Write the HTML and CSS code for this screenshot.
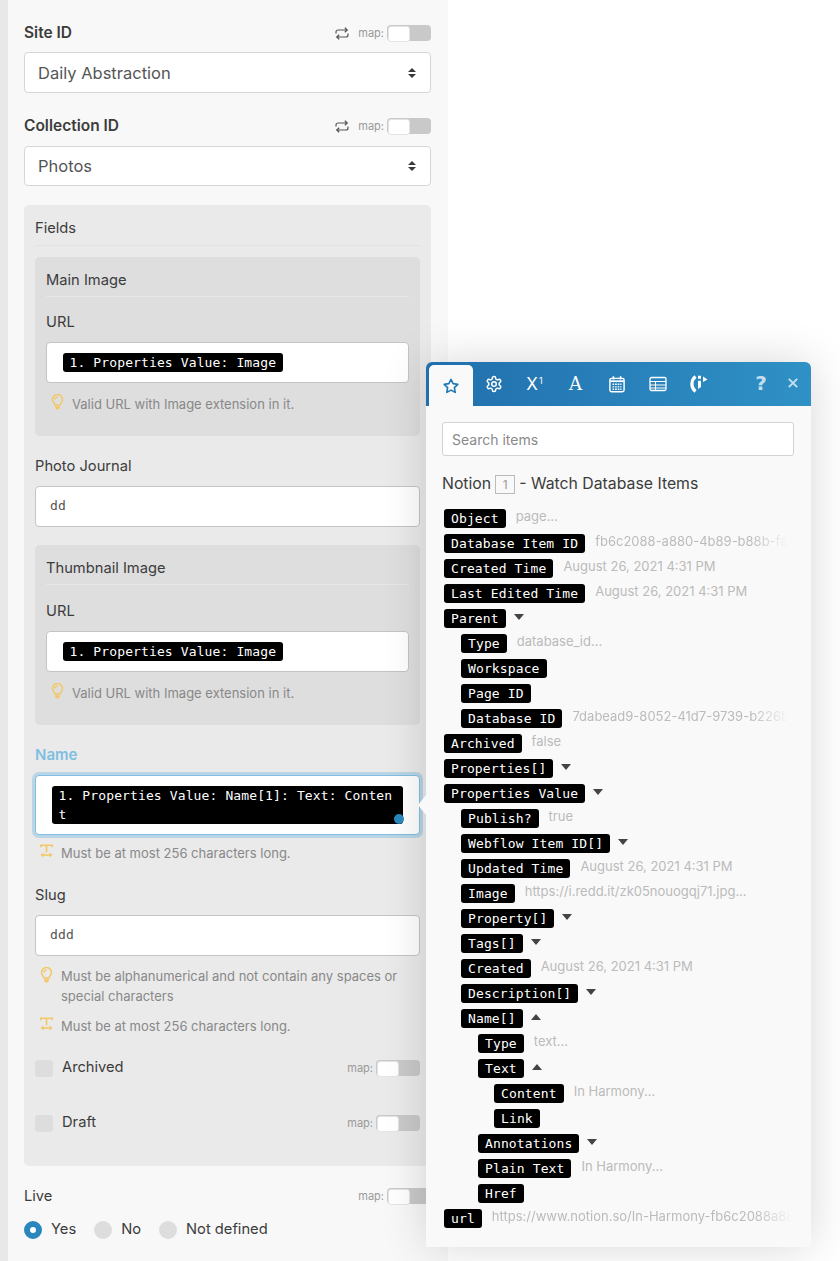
FILE: index.html
```html
<!DOCTYPE html>
<html lang="en">
<head>
<meta charset="utf-8">
<title>Webflow module mapping</title>
<link rel="stylesheet" href="styles.css">
</head>
<body>
<svg class="defs" aria-hidden="true">
  <symbol id="i-repeat" viewBox="0 0 14 13"><path d="M1 6.500V5a2 2 0 0 1 2-2h9M9.800 .7 12.300 3 9.800 5.300M13 6.500V8a2 2 0 0 1-2 2H2M4.200 7.700 1.700 10l2.500 2.300" fill="none" stroke="currentColor" stroke-width="1.200"/></symbol>
  <symbol id="i-sort" viewBox="0 0 8 10"><path d="M4 0 8 4H0zM4 10 0 6h8z" fill="currentColor"/></symbol>
  <symbol id="i-bulb" viewBox="0 0 12 16"><path d="M3.600 11C3.300 9.300 1 8.300 1 5.500a5 5 0 0 1 10 0C11 8.300 8.700 9.300 8.400 11zM6 3a2.500 2.500 0 0 0-2.500 2.500" fill="none" stroke="currentColor" stroke-width="1.500"/><path d="M3.700 12.300h4.600V14L7 15.500H5L3.700 14z" fill="currentColor"/></symbol>
  <symbol id="i-width" viewBox="0 0 13 13"><path d="M.8 2.800V.8h11.400v2M6.500 .8v7" fill="none" stroke="currentColor" stroke-width="1.600"/><path d="M.5 10.500 3.500 8v1.700h6V8l3 2.500-3 2.500v-1.700h-6V13z" fill="currentColor"/></symbol>
</svg>

<main class="panel">
  <div class="label-row"><span class="label strong">Site ID</span><span class="map-box"><svg class="repeat"><use href="#i-repeat"/></svg><span class="map-text">map:</span><span class="toggle"></span></span></div>
  <div class="select"><span>Daily Abstraction</span><svg class="sort"><use href="#i-sort"/></svg></div>

  <div class="label-row second"><span class="label strong">Collection ID</span><span class="map-box"><svg class="repeat"><use href="#i-repeat"/></svg><span class="map-text">map:</span><span class="toggle"></span></span></div>
  <div class="select short"><span>Photos</span><svg class="sort"><use href="#i-sort"/></svg></div>

  <section class="fields">
    <div class="section-head">Fields</div>

    <div class="subpanel">
      <div class="sub-head">Main Image</div>
      <div class="label sub-label">URL</div>
      <div class="input"><span class="pill">1. Properties Value: Image</span></div>
      <div class="hint"><svg class="hint-icon"><use href="#i-bulb"/></svg><span>Valid URL with Image extension in it.</span></div>
    </div>

    <div class="label field-label">Photo Journal</div>
    <div class="input mono">dd</div>

    <div class="subpanel next">
      <div class="sub-head">Thumbnail Image</div>
      <div class="label sub-label">URL</div>
      <div class="input"><span class="pill">1. Properties Value: Image</span></div>
      <div class="hint"><svg class="hint-icon"><use href="#i-bulb"/></svg><span>Valid URL with Image extension in it.</span></div>
    </div>

    <div class="label field-label name-label">Name</div>
    <div class="input focused"><span class="pill wrap">1. Properties Value: Name[1]: Text: Content</span><span class="dot"></span></div>
    <div class="hint name-hint"><svg class="hint-icon"><use href="#i-width"/></svg><span>Must be at most 256 characters long.</span></div>

    <div class="label field-label slug-label">Slug</div>
    <div class="input mono">ddd</div>
    <div class="hint multi"><svg class="hint-icon"><use href="#i-bulb"/></svg><span>Must be alphanumerical and not contain any spaces or special characters</span></div>
    <div class="hint last-hint"><svg class="hint-icon"><use href="#i-width"/></svg><span>Must be at most 256 characters long.</span></div>

    <div class="check-row first-check"><span class="check"></span><span class="label">Archived</span><span class="map-box"><span class="map-text">map:</span><span class="toggle"></span></span></div>
    <div class="check-row"><span class="check"></span><span class="label">Draft</span><span class="map-box"><span class="map-text">map:</span><span class="toggle"></span></span></div>
  </section>

  <div class="label-row live"><span class="label">Live</span><span class="map-box"><span class="map-text">map:</span><span class="toggle"></span></span></div>
  <div class="radios">
    <span class="radio on"></span><span class="label radio-text">Yes</span>
    <span class="radio"></span><span class="label radio-text">No</span>
    <span class="radio"></span><span class="label radio-text">Not defined</span>
  </div>
</main>

<span class="notch"></span>

<aside class="popup">
  <nav class="tabs">
    <span class="tab active"><svg class="tab-icon" viewBox="0 0 24 24"><path d="M12 3.200l2.800 5.700 6.300.9-4.600 4.400 1.100 6.300-5.600-3-5.600 3 1.100-6.300-4.600-4.400 6.300-.9z" fill="none" stroke="currentColor" stroke-width="2.200" stroke-linejoin="round"/></svg></span>
    <span class="tab"><svg class="tab-icon" viewBox="0 0 24 24" fill="none" stroke="currentColor" stroke-width="2"><path d="M12.220 2h-.44a2 2 0 0 0-2 2v.18a2 2 0 0 1-1 1.730l-.43.25a2 2 0 0 1-2 0l-.15-.08a2 2 0 0 0-2.730.73l-.22.38a2 2 0 0 0 .73 2.730l.15.1a2 2 0 0 1 1 1.720v.51a2 2 0 0 1-1 1.740l-.15.09a2 2 0 0 0-.73 2.730l.22.38a2 2 0 0 0 2.730.73l.15-.08a2 2 0 0 1 2 0l.43.25a2 2 0 0 1 1 1.730V20a2 2 0 0 0 2 2h.44a2 2 0 0 0 2-2v-.18a2 2 0 0 1 1-1.730l.43-.25a2 2 0 0 1 2 0l.15.08a2 2 0 0 0 2.730-.73l.22-.39a2 2 0 0 0-.73-2.730l-.15-.08a2 2 0 0 1-1-1.740v-.5a2 2 0 0 1 1-1.740l.15-.09a2 2 0 0 0 .73-2.730l-.22-.38a2 2 0 0 0-2.730-.73l-.15.08a2 2 0 0 1-2 0l-.43-.25a2 2 0 0 1-1-1.730V4a2 2 0 0 0-2-2z"/><circle cx="12" cy="12" r="3"/></svg></span>
    <span class="tab tab-x">X<sup class="tab-sup">1</sup></span>
    <span class="tab tab-a">A</span>
    <span class="tab"><svg class="tab-icon" viewBox="0 0 16 16" fill="none" stroke="currentColor"><rect x="1.700" y="3" width="12.600" height="11.800" rx="1.500" stroke-width="1.300"/><path d="M2 5.500h12" stroke-width="1.600"/><path d="M4.800 1v3M11.200 1v3" stroke-width="1.500"/><path d="M4 8.200h8M4 10.500h8M4 12.700h8" stroke-width="1.200" stroke-dasharray="1.500 .8"/></svg></span>
    <span class="tab"><svg class="tab-icon" viewBox="0 0 18 16" fill="none" stroke="currentColor"><rect x="1" y="1.500" width="16" height="13" rx="1.500" stroke-width="1.300"/><path d="M1 5.500h16M1 9h16M1 12h16M6.500 5.500V14.500" stroke-width="1.100"/></svg></span>
    <span class="tab"><svg class="tab-icon logo" viewBox="0 0 18 18"><path d="M5.500 1.500C.7 5.500.7 12.500 5.500 16.500" fill="none" stroke="currentColor" stroke-width="3.200"/><path d="M8 .8h3v3H8zM8 5.800h3V12l-3 2z" fill="currentColor"/><path d="M13 1.500l4.500 3L13 7z" fill="currentColor"/></svg></span>
    <span class="tab-tools">
      <span class="tool tool-help">?</span>
      <span class="tool"><svg class="close" viewBox="0 0 10 10"><path d="M.8.800l8.400 8.400M9.200.800.800 9.200" stroke="currentColor" stroke-width="1.900" fill="none"/></svg></span>
    </span>
  </nav>
  <div class="popup-body">
    <div class="search">Search items</div>
    <h2 class="module">Notion <span class="module-num">1</span> - Watch Database Items</h2>
    <ul class="tree">
      <li class="row"><span class="pill">Object</span><span class="val">page...</span></li>
      <li class="row"><span class="pill">Database Item ID</span><span class="val fade">fb6c2088-a880-4b89-b88b-fa</span></li>
      <li class="row"><span class="pill">Created Time</span><span class="val">August 26, 2021 4:31 PM</span></li>
      <li class="row"><span class="pill">Last Edited Time</span><span class="val">August 26, 2021 4:31 PM</span></li>
      <li class="row"><span class="pill">Parent</span><span class="caret"></span></li>
      <li class="row l1"><span class="pill">Type</span><span class="val">database_id...</span></li>
      <li class="row l1"><span class="pill">Workspace</span></li>
      <li class="row l1"><span class="pill">Page ID</span></li>
      <li class="row l1"><span class="pill">Database ID</span><span class="val fade">7dabead9-8052-41d7-9739-b226b</span></li>
      <li class="row"><span class="pill">Archived</span><span class="val">false</span></li>
      <li class="row"><span class="pill">Properties[]</span><span class="caret"></span></li>
      <li class="row"><span class="pill">Properties Value</span><span class="caret"></span></li>
      <li class="row l1"><span class="pill">Publish?</span><span class="val">true</span></li>
      <li class="row l1"><span class="pill">Webflow Item ID[]</span><span class="caret"></span></li>
      <li class="row l1"><span class="pill">Updated Time</span><span class="val">August 26, 2021 4:31 PM</span></li>
      <li class="row l1"><span class="pill">Image</span><span class="val">https://i.redd.it/zk05nouogqj71.jpg...</span></li>
      <li class="row l1"><span class="pill">Property[]</span><span class="caret"></span></li>
      <li class="row l1"><span class="pill">Tags[]</span><span class="caret"></span></li>
      <li class="row l1"><span class="pill">Created</span><span class="val">August 26, 2021 4:31 PM</span></li>
      <li class="row l1"><span class="pill">Description[]</span><span class="caret"></span></li>
      <li class="row l1"><span class="pill">Name[]</span><span class="caret up"></span></li>
      <li class="row l2"><span class="pill">Type</span><span class="val">text...</span></li>
      <li class="row l2"><span class="pill">Text</span><span class="caret up"></span></li>
      <li class="row l3"><span class="pill">Content</span><span class="val">In Harmony...</span></li>
      <li class="row l3"><span class="pill">Link</span></li>
      <li class="row l2"><span class="pill">Annotations</span><span class="caret"></span></li>
      <li class="row l2"><span class="pill">Plain Text</span><span class="val">In Harmony...</span></li>
      <li class="row l2"><span class="pill">Href</span></li>
      <li class="row"><span class="pill">url</span><span class="val fade">https://www.notion.so/In-Harmony-fb6c2088a88</span></li>
    </ul>
  </div>
</aside>
</body>
</html>
```

FILE: styles.css
```css
* { box-sizing: border-box; }
html, body { margin: 0; height: 1261px; overflow: hidden; }
body {
  position: relative;
  background: #fff;
  font-family: Inter, "Noto Sans", sans-serif;
  font-size: 14.700px;
  color: #3c3c3c;
}
.defs { position: absolute; width: 0; height: 0; }

/* Left form */
.panel {
  width: 448px;
  height: 1261px;
  border-left: 8px solid #e8e8e8;
  background: #f8f8f8;
  padding: 23px 17px 0 16px;
}
.label { font-size: 14.700px; line-height: 20px; color: #3c3c3c; }
.strong { font-size: 15.500px; font-weight: 600; }
.label-row { display: flex; align-items: center; justify-content: space-between; height: 20px; margin-bottom: 9px; }
.label-row.second { margin: 23px 0 10px; }
.map-box { display: flex; align-items: center; margin-left: auto; }
.repeat { width: 14px; height: 13px; margin-right: 9px; color: #555; }
.map-text { font-size: 11px; color: #999; margin-right: 3px; }
.toggle { position: relative; display: block; width: 44px; height: 16px; border-radius: 4px; background: #c9c9c9; }
.toggle::before {
  content: "";
  position: absolute;
  left: 1px;
  top: 1px;
  width: 20px;
  height: 14px;
  border-radius: 3px;
  border: 1px solid #e4e4e4;
  background: #fff;
}
.select {
  display: flex;
  align-items: center;
  justify-content: space-between;
  height: 41px;
  padding: 0 14px 0 13px;
  border: 1px solid #d6d6d6;
  border-radius: 4px;
  background: #fff;
  font-size: 16.500px;
  color: #555;
}
.select.short { height: 40px; }
.sort { width: 8px; height: 10px; color: #3a3a3a; }

.fields {
  margin-top: 19px;
  padding: 13px 11px 33px;
  border-radius: 5px;
  background: #eaeaea;
}
.section-head { line-height: 20px; padding-bottom: 7px; border-bottom: 1px solid #e2e2e2; margin-bottom: 11px; }
.subpanel { padding: 13px 11px 22px; border-radius: 5px; background: #dedede; }
.subpanel.next { margin-top: 18px; }
.sub-head { line-height: 20px; padding-bottom: 6px; border-bottom: 1px solid #e6e6e6; }
.sub-label { margin-top: 15px; }
.next .sub-label { margin-top: 16px; }
.sub-label + .input { margin-top: 10px; }
.field-label { margin-top: 20px; }
.field-label + .input { margin-top: 10px; }
.name-label { color: #7fbfe3; font-size: 15px; font-weight: 600; }
.slug-label { margin-top: 22px; }
.input {
  position: relative;
  min-height: 41px;
  padding: 10px 16px;
  border: 1px solid #c4c4c4;
  border-radius: 4px;
  background: #fff;
}
.input.mono { padding: 0 14px; line-height: 38px; font-family: "DejaVu Sans Mono", monospace; font-size: 13px; letter-spacing: .12px; color: #555; }
.input.focused { border-color: #7fbfe3; box-shadow: 0 0 0 3px #b9d5e6; }
.pill {
  display: inline-block;
  flex: none;
  padding: 0 7px;
  border-radius: 3px;
  background: #000;
  color: #fff;
  font-family: "DejaVu Sans Mono", monospace;
  font-size: 13px;
  letter-spacing: .12px;
  line-height: 19px;
  white-space: pre;
}
.input .pill { padding: 0 6.500px; vertical-align: top; }
.input .pill.wrap { display: block; white-space: normal; word-break: break-all; }
.dot { position: absolute; left: 358px; top: 38px; width: 10px; height: 10px; border-radius: 50%; background: #2a87bd; }
.hint { display: flex; margin-top: 11px; padding-left: 5px; font-size: 13px; line-height: 20px; color: #888; }
.hint.name-hint { margin-top: 8px; }
.hint.multi { line-height: 19.500px; }
.hint.last-hint { margin-top: 10px; }
.hint-icon { flex: none; width: 13px; height: 16px; margin: 0 8px 0 0; color: #f3c766; }

.check-row { display: flex; align-items: center; height: 20px; margin-top: 35px; }
.check-row.first-check { margin-top: 22px; }
.check-row .label { margin-bottom: 2px; }
.check { width: 18px; height: 17px; margin-right: 9px; border-radius: 3px; background: #ddd; }
.label-row.live { margin: 20px 0 13px; }
.radios { display: flex; align-items: center; height: 20px; }
.radio { width: 18px; height: 18px; margin-top: 2px; border-radius: 50%; background: #ddd; }
.radio.on { background: #fff; border: 6px solid #2a87bd; }
.radio-text { margin: 0 18px 0 9px; }

/* Data picker popup */
.popup {
  position: absolute;
  left: 426px;
  top: 362px;
  width: 385px;
  height: 885px;
  border-radius: 6px 6px 0 0;
  background: #f9f9f9;
  box-shadow: 0 0 45px rgba(0, 0, 0, .16);
}
.notch {
  position: absolute;
  z-index: 2;
  left: 418px;
  top: 795px;
  width: 0;
  height: 0;
  border-style: solid;
  border-width: 10px 8px 10px 0;
  border-color: transparent #f9f9f9 transparent transparent;
}
.tabs {
  display: flex;
  height: 44px;
  padding: 3px 2px 0 3px;
  border-radius: 6px 6px 0 0;
  background: linear-gradient(90deg, #216fad, #2f91c6);
}
.tab { display: flex; align-items: center; justify-content: center; width: 41px; color: #fff; padding-bottom: 3px; }
.tab.active { width: 44px; border-radius: 5px 5px 0 0; background: #f9f9f9; color: #2178b4; padding-bottom: 0; }
.tab-icon { width: 18px; height: 18px; }
.tab-x { font-size: 17px; line-height: 20px; }
.tab-sup { font-size: 9px; line-height: 9px; margin: -7px 0 0 1px; align-self: center; }
.tab-a { font-family: "DejaVu Serif", serif; font-size: 18px; line-height: 20px; }
.tab-tools { display: flex; margin-left: auto; }
.tool { display: flex; align-items: center; justify-content: center; width: 32px; padding-bottom: 5px; color: rgba(255, 255, 255, .72); }
.tool-help { font-family: "DejaVu Sans", sans-serif; font-weight: 700; font-size: 20px; }
.close { width: 10px; height: 10px; }

.popup-body { padding: 16px 17px 0 16px; }
.search {
  height: 34px;
  padding: 0 9px;
  border: 1px solid #d2d2d2;
  border-radius: 3px;
  background: #fff;
  font-size: 14px;
  line-height: 33px;
  color: #8a8a8a;
}
.module { display: flex; align-items: center; gap: 4px; margin: 17px 0 15px; font-size: 15.800px; font-weight: 400; line-height: 20px; color: #3c3c3c; }
.module-num {
  width: 20px;
  height: 19px;
  margin: 2px 0 0;
  border: 1px solid #bbb;
  font-size: 12px;
  line-height: 18px;
  text-align: center;
  color: #999;
}
.tree { display: flex; flex-direction: column; gap: 6px; width: 348px; margin: 0 0 0 2px; padding: 0; list-style: none; }
.row { display: flex; align-items: center; height: 19px; }
.l1 { padding-left: 17px; }
.l2 { padding-left: 34px; }
.l3 { padding-left: 50px; }
.val { min-width: 0; margin: -5px 0 0 10px; font-size: 13px; line-height: 19px; color: #bbb; white-space: nowrap; }
.val.fade { -webkit-mask-image: linear-gradient(90deg, #000 calc(100% - 38px), transparent); mask-image: linear-gradient(90deg, #000 calc(100% - 38px), transparent); }
.caret { width: 0; height: 0; margin: -3px 0 0 8px; border-style: solid; border-width: 6px 5px 0; border-color: #444 transparent transparent; }
.caret.up { border-width: 0 5px 6px; border-color: transparent transparent #444; }
```
